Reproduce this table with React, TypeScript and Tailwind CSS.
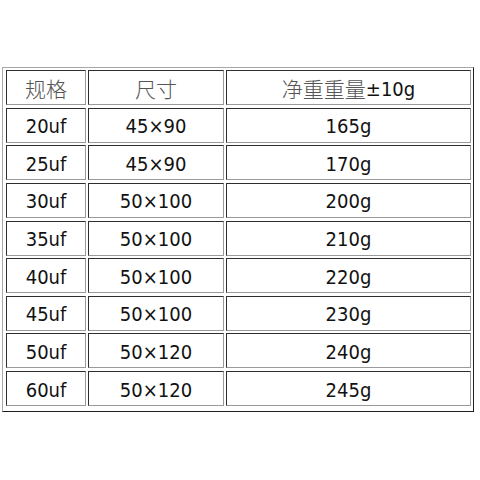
import React from "react";

const rows: [string, string, string][] = [
  ["20uf", "45×90", "165g"],
  ["25uf", "45×90", "170g"],
  ["30uf", "50×100", "200g"],
  ["35uf", "50×100", "210g"],
  ["40uf", "50×100", "220g"],
  ["45uf", "50×100", "230g"],
  ["50uf", "50×120", "240g"],
  ["60uf", "50×120", "245g"],
];

const cell =
  "flex items-center justify-center pt-[2px] border border-t-[#2e2e2e] border-l-[#2e2e2e] border-r-[#9a9a9a] border-b-[#9a9a9a] bg-white";

const Cjk = ({ children }: { children: React.ReactNode }) => (
  <span className="text-[21px] text-[#555] font-light font-['Noto_Sans_CJK_SC',sans-serif]">{children}</span>
);

export default function App() {
  return (
    <div className="w-[480px] h-[480px] bg-white font-['DejaVu_Sans_Condensed','DejaVu_Sans','Noto_Sans_CJK_SC',sans-serif] font-stretch-condensed text-[20px] text-[#111] leading-none">
      <div className="ml-[2px] mt-[67px] inline-block border border-t-[#a8a8a8] border-l-[#a8a8a8] border-r-[#1e1e1e] border-b-[#1e1e1e] pt-[2px] pl-[3px] pr-[2px] pb-[5px]">
        <div className="grid grid-cols-[80px_136px_245px] auto-rows-[35px] gap-x-[2px] gap-y-[2.625px]">
          <div className={cell}>
            <Cjk>规格</Cjk>
          </div>
          <div className={cell}>
            <Cjk>尺寸</Cjk>
          </div>
          <div className={cell}>
            <Cjk>净重重量</Cjk>
            <span>±10g</span>
          </div>
          {rows.map((r) => (
            <React.Fragment key={r[0]}>
              <div className={cell}>{r[0]}</div>
              <div className={cell}>{r[1]}</div>
              <div className={cell}>{r[2]}</div>
            </React.Fragment>
          ))}
        </div>
      </div>
    </div>
  );
}
